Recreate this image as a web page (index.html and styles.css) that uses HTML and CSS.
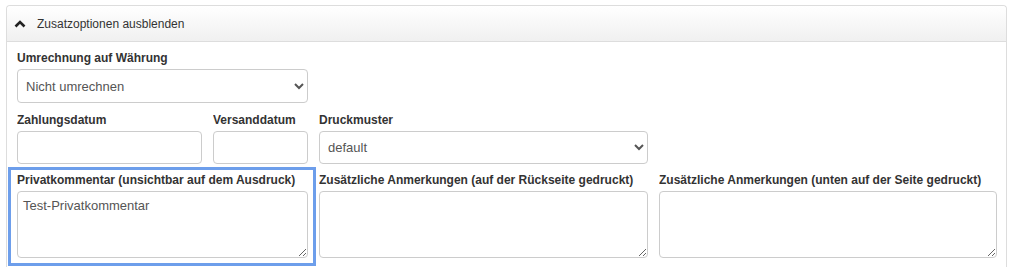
FILE: index.html
```html
<!DOCTYPE html>
<html lang="de">
<head>
  <meta charset="UTF-8">
  <title>Zusatzoptionen</title>
  <link rel="stylesheet" href="styles.css">
</head>
<body>
  <div class="panel">
    <div class="panel-heading">
      <svg class="chevron" width="12" height="8" viewBox="0 0 12 8">
        <polyline points="1.5,6.5 6,2 10.5,6.5" fill="none" stroke="#222" stroke-width="2.6"/>
      </svg>
      <span>Zusatzoptionen ausblenden</span>
    </div>
    <div class="panel-body">
      <div class="row">
        <div class="field w-a">
          <label>Umrechnung auf Währung</label>
          <select><option>Nicht umrechnen</option></select>
        </div>
      </div>
      <div class="row">
        <div class="field w-a1">
          <label>Zahlungsdatum</label>
          <input type="text">
        </div>
        <div class="field w-a2">
          <label>Versanddatum</label>
          <input type="text">
        </div>
        <div class="field w-b">
          <label>Druckmuster</label>
          <select><option>default</option></select>
        </div>
      </div>
      <div class="row">
        <div class="field w-a highlight">
          <label>Privatkommentar (unsichtbar auf dem Ausdruck)</label>
          <textarea>Test-Privatkommentar</textarea>
        </div>
        <div class="field w-b">
          <label>Zusätzliche Anmerkungen (auf der Rückseite gedruckt)</label>
          <textarea></textarea>
        </div>
        <div class="field w-c">
          <label>Zusätzliche Anmerkungen (unten auf der Seite gedruckt)</label>
          <textarea></textarea>
        </div>
      </div>
    </div>
  </div>
</body>
</html>
```

FILE: styles.css
```css
* { margin: 0; padding: 0; box-sizing: border-box; }
body {
  font-family: "Liberation Sans", Arial, sans-serif;
  font-size: 12px;
  color: #333;
  background: #fff;
  overflow: hidden;
}

.panel {
  margin: 5px 3px 0 6px;
  height: 262px;
  border: 1px solid #ddd;
  border-bottom: none;
  border-radius: 4px 4px 0 0;
}
.panel-heading {
  height: 36px;
  display: flex;
  align-items: center;
  padding-left: 7px;
  background: linear-gradient(#fff, #f0f0f0);
  border-bottom: 1px solid #ddd;
  border-radius: 4px 4px 0 0;
  color: #333;
}
.chevron { margin-right: 11px; }

.panel-body { padding: 9px 0 0 10px; }

.row {
  display: flex;
  gap: 11px;
  margin-bottom: 9px;
}
.row:nth-child(1) { margin-bottom: 10px; }

.field { display: flex; flex-direction: column; }
.w-a { width: 291px; }
.w-a1 { width: 185px; }
.w-a2 { width: 95px; }
.w-b { width: 329px; }
.w-c { width: 338px; }

.field label {
  font-weight: bold;
  line-height: 15px;
  margin-bottom: 3px;
  white-space: nowrap;
  overflow: hidden;
}

.field input,
.field select,
.field textarea {
  width: 100%;
  border: 1px solid #ccc;
  border-radius: 4px;
  background: #fff;
  font-family: "Liberation Sans", Arial, sans-serif;
  font-size: 13px;
  color: #555;
}
.field input { height: 33px; padding: 0 6px; }
.field select { height: 34px; padding: 0 4px; }
.row:nth-child(2) select { height: 33px; }
.field textarea { height: 67px; padding: 6px 5px; resize: vertical; }

.highlight {
  border: 3px solid #6d9eeb;
  padding: 3px 5px 5px 6px;
  margin: -6px -8px -8px -9px;
  width: 308px;
}
```
